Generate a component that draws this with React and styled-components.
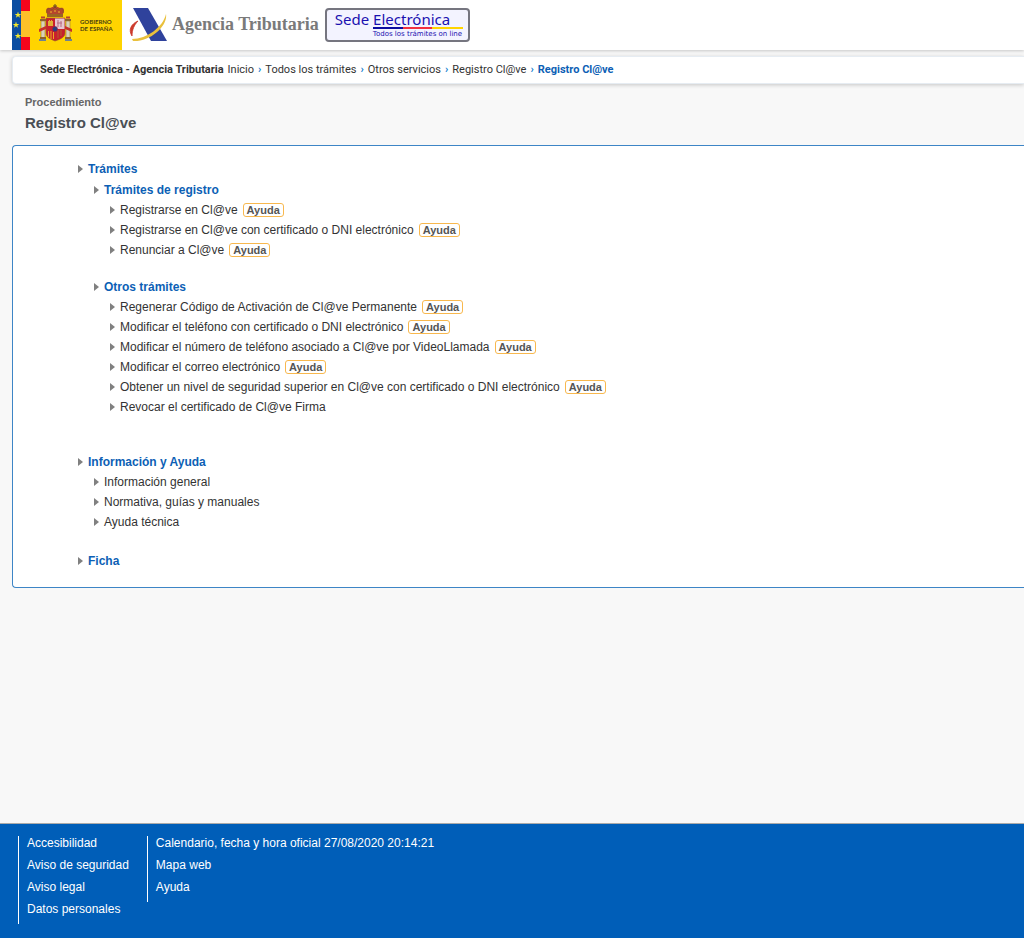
import styled, { createGlobalStyle } from "styled-components";

const GlobalStyle = createGlobalStyle`
  * {
    box-sizing: border-box;
  }
  body {
    margin: 0;
    background: #f8f8f8;
    color: #333;
    font-family: "Liberation Sans", Arial, sans-serif;
    font-size: 12px;
    overflow-x: hidden;
  }
  a {
    color: inherit;
    text-decoration: none;
  }
  ul, ol {
    list-style: none;
    margin: 0;
    padding: 0;
  }
`;

const Page = styled.div`
  display: flex;
  flex-direction: column;
  min-height: 100vh;
`;

const Header = styled.header`
  display: flex;
  align-items: flex-start;
  height: 50px;
  padding-left: 12px;
  background: #fff;
  box-shadow: 0 1px 3px rgba(0, 0, 0, 0.2);
`;

const Gobierno = styled.a`
  display: flex;
  align-items: center;
  width: 110px;
  height: 50px;
  background: #ffd400;
  color: #4a3c10;
  font: 6px/7px "Lato", sans-serif;
  font-weight: 700;
`;

const AgencyLink = styled.a`
  display: flex;
  align-items: center;
  gap: 5px;
  height: 48px;
  margin-left: 7px;
  color: #7a7a7a;
  font-family: "Liberation Serif", serif;
  font-weight: 700;
  font-size: 18px;
`;

const SedeLink = styled.a`
  display: block;
  width: 145px;
  height: 34px;
  margin: 8px 0 0 6px;
  padding: 2px 5px 0 8px;
  border: 2px solid #75757f;
  border-radius: 4px;
  background: #f3f3ff;
  color: #1a10b0;
  font-family: "Noto Sans", sans-serif;
`;

const SedeName = styled.span`
  display: block;
  font-size: 15px;
  line-height: 15px;
`;

const SedeStripe = styled.span`
  display: block;
  height: 2px;
  margin-left: 38px;
  background: linear-gradient(90deg, #0c0ca0 0 33%, #f23040 33% 66%, #ffd400 66%);
`;

const SedeSlogan = styled.span`
  display: block;
  margin-left: 38px;
  font-family: "DejaVu Sans", sans-serif;
  font-size: 7px;
  line-height: 11px;
  white-space: nowrap;
`;

const Breadcrumb = styled.nav`
  margin: 6px 0 0 12px;
  padding-left: 27px;
  border: 1px solid #e6ecf2;
  border-right: 0;
  border-radius: 4px 0 0 4px;
  background: #fff;
  box-shadow: 0 1px 4px rgba(0, 0, 0, 0.2);
  font: 11px/26px Roboto, sans-serif;

  ol {
    display: flex;
  }
`;

const Crumb = styled.li`
  color: ${({ $current }) => ($current ? "#0d5fb5" : "#333")};
  font-weight: ${({ $strong }) => ($strong ? 700 : 400)};

  &:first-child {
    margin-right: 4px;
  }

  &:nth-child(n + 3)::before {
    content: "›";
    margin: 0 4px;
    color: #1581d0;
    font-weight: 700;
  }
`;

const Heading = styled.div`
  padding: 11px 25px 12px;
  color: #4a4f55;
`;

const Kicker = styled.p`
  margin: 0;
  color: #666;
  font-size: 11px;
  font-weight: 700;
  line-height: 14px;
`;

const Title = styled.h1`
  margin: 4px 0 0;
  font-size: 15px;
  line-height: 20px;
`;

const Panel = styled.main`
  margin-left: 12px;
  padding: 12px 0 16px 65px;
  border: 1px solid #3d85c6;
  border-right: 0;
  border-radius: 4px 0 0 4px;
  background: #fff;
`;

const Section = styled.section`
  margin-bottom: ${({ $gap }) => $gap}px;
`;

const Item = styled.div`
  display: flex;
  align-items: center;
  height: ${({ $heading }) => ($heading ? 21 : 20)}px;
  padding-left: ${({ $level }) => $level * 16}px;

  &::before {
    content: "";
    margin-right: 5px;
    border: 4px solid transparent;
    border-left: 5px solid #808080;
    border-right: 0;
  }
`;

const SectionLink = styled.a`
  color: #0d5fb5;
  font-weight: 700;
`;

const HelpLink = styled.a`
  margin-left: 5px;
  padding: 0 3px;
  border: 1px solid #f8b84e;
  border-radius: 3px;
  color: #555;
  font-size: 11px;
  font-weight: 700;
  line-height: 12px;
`;

const Footer = styled.footer`
  display: flex;
  gap: 18px;
  min-height: 115px;
  margin-top: auto;
  padding: 12px 18px;
  border-top: 1px solid #aaa;
  background: #005eb8;
  color: #fff;
`;

const FooterList = styled.ul`
  align-self: flex-start;
  padding-left: 8px;
  border-left: 1px solid #fff;
  line-height: 14px;

  li {
    padding-bottom: 8px;
  }
`;

const registro = [
  { text: "Registrarse en Cl@ve", help: true },
  { text: "Registrarse en Cl@ve con certificado o DNI electrónico", help: true },
  { text: "Renunciar a Cl@ve", help: true },
];

const otros = [
  { text: "Regenerar Código de Activación de Cl@ve Permanente", help: true },
  { text: "Modificar el teléfono con certificado o DNI electrónico", help: true },
  { text: "Modificar el número de teléfono asociado a Cl@ve por VideoLlamada", help: true },
  { text: "Modificar el correo electrónico", help: true },
  { text: "Obtener un nivel de seguridad superior en Cl@ve con certificado o DNI electrónico", help: true },
  { text: "Revocar el certificado de Cl@ve Firma" },
];

const informacion = [
  { text: "Información general" },
  { text: "Normativa, guías y manuales" },
  { text: "Ayuda técnica" },
];

const Rows = ({ items, level }) =>
  items.map(({ text, help }) => (
    <Item key={text} $level={level}>
      <a href="#">{text}</a>
      {help && <HelpLink href="#">Ayuda</HelpLink>}
    </Item>
  ));

const Star = ({ x, y }) => (
  <path
    transform={`translate(${x} ${y})`}
    d="M0-3.4 .8-1.1H3.3L1.3.4 2.1 2.8 0 1.3-2.1 2.8-1.3.4-3.3-1.1H-.8Z"
    fill="#f4e82c"
  />
);

const SpainLogo = () => (
  <svg width="68" height="50" viewBox="0 0 68 50" aria-hidden="true">
    <path fill="#0a4da2" d="M0 0h9v50H0z" />
    <path fill="#f5051c" d="M9 0h9v50H9z" />
    <path fill="#fdc02a" d="M9 11h9v26H9z" />
    <Star x="6" y="15" />
    <Star x="4" y="25" />
    <Star x="6" y="36" />
    {/* crown */}
    <path d="M35 14c-2-5 0-7 3-6l5-2 5 2c4-1 5 2 3 6z" fill="#b4462c" />
    <path d="M35 13c-1-4 2-6 5-3l3-3 3 3c3-3 6-1 5 3" fill="none" stroke="#8b5722" />
    <path d="M38 12h2M42 11h2M46 12h2" stroke="#f0b52c" />
    <path d="M43 4v4M41 6h4" stroke="#6b4a1e" />
    <path d="M35 14h16v3H35z" fill="#9a6424" />
    {/* shield */}
    <path d="M34 18h19v15c0 4-4 6-10 8-5-2-9-4-9-8z" fill="#c9202d" stroke="#91602b" strokeWidth=".6" />
    <path d="M43 18.500h9.500V29H43z" fill="#e6c5d0" />
    <path d="M46 20v7M49 21v6M45 23h5" stroke="#b76a82" />
    <path d="M36 26v-5h1v-1h1v1h1v-1h1v1h1v5z" fill="#dfae38" />
    <path d="M46 30v8M49 30v6" stroke="#b2612b" />
    <path d="M36.500 31v6M39 31v8M41.500 32v7" stroke="#e9aa22" />
    <circle cx="43" cy="29" r="2.500" fill="#253e83" stroke="#8b2745" strokeWidth=".6" />
    {/* pillars of Hercules */}
    <path d="M29 21h4v17h-4zM54 21h4v17h-4z" fill="#d8d2b8" stroke="#a6752f" strokeWidth=".6" />
    <path d="M28 20h6M53 20h6M28 38h6M53 38h6" stroke="#8e642a" strokeWidth="2" />
    <path d="M29 17.500h4M54 17.500h4" stroke="#b44232" strokeWidth="2" />
    <path d="M27 29l7-3v3l-7 3zM60 29l-7-3v3l7 3z" fill="#c7302a" />
    <path d="M27 40h7M53 40h7" stroke="#6f8292" strokeWidth="2" />
  </svg>
);

const AgencyLogo = () => (
  <svg width="38" height="36" viewBox="0 0 38 36" aria-hidden="true">
    <path d="M4 2h15l19 33H22z" fill="#2f429c" />
    <path d="M9 15C2 18-1 24 3 30c0-6 2-11 6-15z" fill="#cc3a2c" stroke="#cc3a2c" strokeWidth=".8" />
    <path d="M37 8c2 12-16 28-33 27l-1-2C18 33 34 21 37 8z" fill="#e9c03d" />
  </svg>
);

const App = () => {
  return (
    <Page>
      <GlobalStyle />
      <Header>
        <Gobierno href="#">
          <SpainLogo />
          <span>
            GOBIERNO
            <br />
            DE ESPAÑA
          </span>
        </Gobierno>
        <AgencyLink href="#">
          <AgencyLogo />
          Agencia Tributaria
        </AgencyLink>
        <SedeLink href="#">
          <SedeName>Sede Electrónica</SedeName>
          <SedeStripe />
          <SedeSlogan>Todos los trámites on line</SedeSlogan>
        </SedeLink>
      </Header>
      <Breadcrumb aria-label="Ruta">
        <ol>
          <Crumb $strong>
            <a href="#">Sede Electrónica - Agencia Tributaria</a>
          </Crumb>
          <Crumb>
            <a href="#">Inicio</a>
          </Crumb>
          <Crumb>
            <a href="#">Todos los trámites</a>
          </Crumb>
          <Crumb>
            <a href="#">Otros servicios</a>
          </Crumb>
          <Crumb>
            <a href="#">Registro Cl@ve</a>
          </Crumb>
          <Crumb $strong $current>
            Registro Cl@ve
          </Crumb>
        </ol>
      </Breadcrumb>
      <Heading>
        <Kicker>Procedimiento</Kicker>
        <Title>Registro Cl@ve</Title>
      </Heading>
      <Panel>
        <Section $gap={34}>
          <Item $heading $level={0}>
            <SectionLink href="#">Trámites</SectionLink>
          </Item>
          <Section $gap={16}>
            <Item $heading $level={1}>
              <SectionLink href="#">Trámites de registro</SectionLink>
            </Item>
            <Rows items={registro} level={2} />
          </Section>
          <Item $heading $level={1}>
            <SectionLink href="#">Otros trámites</SectionLink>
          </Item>
          <Rows items={otros} level={2} />
        </Section>
        <Section $gap={18}>
          <Item $heading $level={0}>
            <SectionLink href="#">Información y Ayuda</SectionLink>
          </Item>
          <Rows items={informacion} level={1} />
        </Section>
        <Item $heading $level={0}>
          <SectionLink href="#">Ficha</SectionLink>
        </Item>
      </Panel>
      <Footer>
        <FooterList>
          <li><a href="#">Accesibilidad</a></li>
          <li><a href="#">Aviso de seguridad</a></li>
          <li><a href="#">Aviso legal</a></li>
          <li><a href="#">Datos personales</a></li>
        </FooterList>
        <FooterList>
          <li><a href="#">Calendario, fecha y hora oficial 27/08/2020 20:14:21</a></li>
          <li><a href="#">Mapa web</a></li>
          <li><a href="#">Ayuda</a></li>
        </FooterList>
      </Footer>
    </Page>
  );
};

export default App;
